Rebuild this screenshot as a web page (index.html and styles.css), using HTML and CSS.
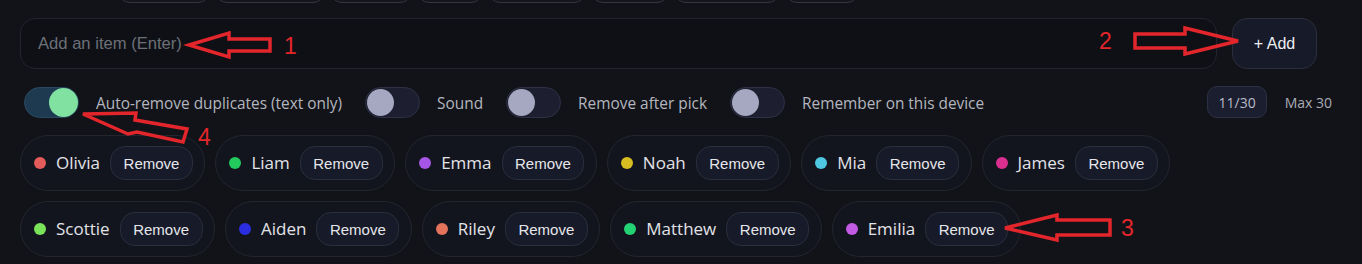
FILE: index.html
```html
<!DOCTYPE html>
<html lang="en">
<head>
<meta charset="utf-8">
<title>Picker</title>
<link rel="stylesheet" href="styles.css">
</head>
<body>
<div class="app">
  <div class="top-pills">
    <span class="pill p1"></span>
    <span class="pill p2"></span>
    <span class="pill p3"></span>
    <span class="pill p4"></span>
    <span class="pill p5"></span>
    <span class="pill p6"></span>
    <span class="pill p7"></span>
    <span class="pill p8"></span>
  </div>

  <div class="input-row">
    <input class="item-input" type="text" placeholder="Add an item (Enter)">
    <button class="add-btn">+ Add</button>
  </div>

  <div class="options">
    <label class="opt"><span class="toggle on"><span class="knob"></span></span><span class="opt-text">Auto-remove duplicates (text only)</span></label>
    <label class="opt"><span class="toggle"><span class="knob"></span></span><span class="opt-text">Sound</span></label>
    <label class="opt"><span class="toggle"><span class="knob"></span></span><span class="opt-text">Remove after pick</span></label>
    <label class="opt"><span class="toggle"><span class="knob"></span></span><span class="opt-text">Remember on this device</span></label>
    <div class="count">
      <span class="count-pill">11/30</span>
      <span class="count-max">Max 30</span>
    </div>
  </div>

  <div class="chips">
    <div class="chip"><span class="dot c-olivia"></span><span class="name">Olivia</span><button class="remove">Remove</button></div>
    <div class="chip"><span class="dot c-liam"></span><span class="name">Liam</span><button class="remove">Remove</button></div>
    <div class="chip"><span class="dot c-emma"></span><span class="name">Emma</span><button class="remove">Remove</button></div>
    <div class="chip"><span class="dot c-noah"></span><span class="name">Noah</span><button class="remove">Remove</button></div>
    <div class="chip"><span class="dot c-mia"></span><span class="name">Mia</span><button class="remove">Remove</button></div>
    <div class="chip"><span class="dot c-james"></span><span class="name">James</span><button class="remove">Remove</button></div>
    <div class="chip"><span class="dot c-scottie"></span><span class="name">Scottie</span><button class="remove">Remove</button></div>
    <div class="chip"><span class="dot c-aiden"></span><span class="name">Aiden</span><button class="remove">Remove</button></div>
    <div class="chip"><span class="dot c-riley"></span><span class="name">Riley</span><button class="remove">Remove</button></div>
    <div class="chip"><span class="dot c-matthew"></span><span class="name">Matthew</span><button class="remove">Remove</button></div>
    <div class="chip"><span class="dot c-emilia"></span><span class="name">Emilia</span><button class="remove">Remove</button></div>
  </div>
</div>

<svg class="annotations" width="1362" height="264" viewBox="0 0 1362 264" aria-hidden="true">
  <g class="arrow">
    <polygon points="189,45 229,33 229,39 270,39 270,51 229,51 229,57"/>
    <polygon points="1238,41 1185,28 1185,34 1135,34 1135,48 1185,48 1185,54"/>
    <polygon points="1005,228 1057,215 1057,220 1110,220 1110,235 1057,235 1057,240"/>
    <polygon points="83,114 136,113 135,120 187,129 183,142 137,132 128,134"/>
  </g>
  <g class="num">
    <text x="284" y="54">1</text>
    <text x="1099" y="49">2</text>
    <text x="1121" y="236">3</text>
    <text x="198" y="145">4</text>
  </g>
</svg>
</body>
</html>
```

FILE: styles.css
```css
* { box-sizing: border-box; }

html, body {
  margin: 0;
  padding: 0;
  background: #121318;
  overflow: hidden;
}

body {
  position: relative;
  width: 1362px;
  height: 264px;
  font-family: "Open Sans", "Noto Sans", sans-serif;
  color: #b7b9c2;
}

.app {
  padding: 0 30px 0 20px;
}

/* partially visible row above */
.top-pills {
  display: flex;
  gap: 5px;
  margin-top: -31px;
  padding-left: 98px;
  height: 34px;
}
.pill {
  height: 34px;
  border: 1px solid #34363f;
  border-radius: 12px;
  background: #15161c;
}
.p1 { width: 92px; }
.p2 { width: 110px; }
.p3 { width: 82px; }
.p4 { width: 66px; }
.p5 { width: 98px; }
.p6 { width: 78px; }
.p7 { width: 106px; }
.p8 { width: 74px; }

/* input row */
.input-row {
  display: flex;
  gap: 15px;
  margin-top: 15px;
  margin-right: 15px;
  height: 51px;
}
.item-input {
  flex: 1;
  height: 51px;
  background: #0e1015;
  border: 1px solid #22252d;
  border-radius: 15px;
  padding: 0 17px;
  font-family: "Liberation Sans", Arial, sans-serif;
  font-size: 16.6px;
  color: #d8d9de;
  outline: none;
}
.item-input::placeholder { color: #6d7079; }

.add-btn {
  width: 85px;
  height: 51px;
  background: #171a28;
  border: 1px solid #2b2e3b;
  border-radius: 15px;
  color: #eceef2;
  font-family: "Liberation Sans", Arial, sans-serif;
  font-size: 16px;
  padding: 0;
}

/* options row */
.options {
  display: flex;
  align-items: center;
  margin-top: 17px;
  padding-left: 4px;
  height: 32px;
}
.opt {
  display: flex;
  align-items: center;
  gap: 17px;
  margin-right: 23px;
}
.opt-text {
  font-size: 15.4px;
  line-height: 20px;
  padding-top: 3px;
  color: #b4b6bf;
  white-space: nowrap;
}
.toggle {
  position: relative;
  display: block;
  width: 55px;
  height: 31px;
  border-radius: 16px;
  background: #1d1f30;
  border: 1px solid #2e3146;
}
.knob {
  position: absolute;
  top: 1px;
  left: 1px;
  width: 27px;
  height: 27px;
  border-radius: 50%;
  background: #a5a8c0;
}
.toggle.on {
  background: #1d3a50;
  border-color: #2a4a60;
}
.toggle.on .knob {
  left: auto;
  right: 0;
  top: 0;
  width: 29px;
  height: 29px;
  background: #80e1a1;
}

.count {
  margin-left: auto;
  display: flex;
  align-items: center;
  gap: 18px;
}
.count-pill {
  height: 32px;
  padding: 0 10px;
  display: flex;
  align-items: center;
  background: #1b1e2f;
  border: 1px solid #2c3044;
  border-radius: 10px;
  font-size: 14px;
  color: #b9bbc6;
}
.count-max {
  font-size: 14px;
  color: #a9abb5;
}

/* chips */
.chips {
  display: flex;
  flex-wrap: wrap;
  gap: 10px 10px;
  margin-top: 17px;
}
.chip {
  display: flex;
  align-items: center;
  height: 56px;
  padding: 0 11.5px 0 13px;
  background: #13151e;
  border: 1px solid #24262f;
  border-radius: 28px;
}
.dot {
  width: 12px;
  height: 12px;
  border-radius: 50%;
  margin-right: 10px;
}
.name {
  font-size: 17px;
  line-height: 22px;
  color: #e2e3e8;
  margin-right: 10px;
}
.remove {
  height: 34px;
  padding: 0 12.5px;
  background: #171a28;
  border: 1px solid #2b2e3c;
  border-radius: 15px;
  color: #e6e7eb;
  font-family: "Liberation Sans", Arial, sans-serif;
  font-size: 15px;
}

.c-olivia { background: #e35b5b; }
.c-liam { background: #22c95c; }
.c-emma { background: #a656e6; }
.c-noah { background: #d8bd22; }
.c-mia { background: #4fc7e3; }
.c-james { background: #d9308f; }
.c-scottie { background: #7be35a; }
.c-aiden { background: #2b2ee0; }
.c-riley { background: #e3735a; }
.c-matthew { background: #23d273; }
.c-emilia { background: #c25ae3; }

/* annotation overlay */
.annotations {
  position: absolute;
  top: 0;
  left: 0;
  pointer-events: none;
}
.arrow polygon {
  fill: none;
  stroke: #e3262b;
  stroke-width: 3.5;
  stroke-linejoin: miter;
}
.num text {
  fill: #e3262b;
  font-family: "Liberation Sans", Arial, sans-serif;
  font-size: 23px;
}
```
